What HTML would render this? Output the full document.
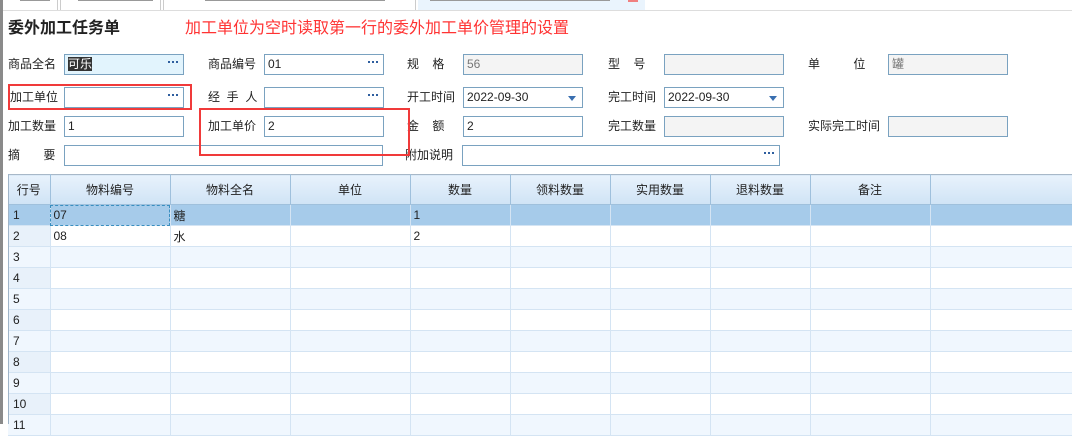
<!DOCTYPE html>
<html><head><meta charset="utf-8"><style>
*{margin:0;padding:0;box-sizing:border-box}
body{width:1072px;height:424px;background:#fff;position:relative;overflow:hidden;font-family:"Liberation Sans","Noto Sans CJK SC",sans-serif;font-size:12px;color:#222}
.a{position:absolute}
.lb{position:absolute;font-size:12px;line-height:20px;white-space:nowrap}
.in{position:absolute;height:21px;border:1px solid #7aa2c0;background:#fff;font-size:12px;line-height:19px;padding-left:3px;font-family:"Liberation Sans","Noto Sans CJK SC",sans-serif}
.g{background:#f4f4f4;color:#777}
.dots{position:absolute;right:4px;top:4px;width:11px;height:6px}
.dots i{position:absolute;top:2px;width:2px;height:2px;background:#2f5f9f}
.tri{position:absolute;right:6px;top:8px;width:0;height:0;border-left:4px solid transparent;border-right:4px solid transparent;border-top:5px solid #3a6fb0}
.red{position:absolute;border:2px solid #f03a3a}
table{position:absolute;left:8px;top:174px;border-collapse:collapse;table-layout:fixed;width:1072px}
td,th{height:21px;border-right:1px solid #d4e4f3;border-bottom:1px solid #d4e4f3;font-weight:normal;font-size:12px;padding-left:3px;text-align:left;white-space:nowrap;overflow:hidden}
th{height:30px;background:linear-gradient(#e8f2fc,#cfe3f5);border-right:1px solid #9fc0dc;border-bottom:1px solid #9fc0dc;border-top:1px solid #a8b8c8;text-align:center;padding:0}
tr.s td{background:#a6cbea}
tr.o td{background:#f0f7fe}
td.n{background:#e8f1fa;padding-left:5px}
tr.s td.n{background:#a6cbea}
</style></head><body>
<div class="a" style="left:0;top:0;width:3px;height:424px;background:#8a8a8a"></div>
<div class="a" style="left:3px;top:10px;width:1069px;height:1px;background:#ddd"></div>
<div class="a" style="left:57px;top:0;width:1px;height:10px;background:#ccc"></div>
<div class="a" style="left:60px;top:0;width:1px;height:10px;background:#ccc"></div>
<div class="a" style="left:160px;top:0;width:1px;height:10px;background:#ccc"></div>
<div class="a" style="left:163px;top:0;width:1px;height:10px;background:#ccc"></div>
<div class="a" style="left:415px;top:0;width:1px;height:10px;background:#ccc"></div>
<div class="a" style="left:418px;top:0;width:227px;height:10px;background:#eaf4fd"></div>
<div class="a" style="left:20px;top:0;width:30px;height:1px;background:#999"></div>
<div class="a" style="left:78px;top:0;width:75px;height:1px;background:#999"></div>
<div class="a" style="left:205px;top:0;width:180px;height:1px;background:#999"></div>
<div class="a" style="left:430px;top:0;width:180px;height:1px;background:#999"></div>
<div class="a" style="left:628px;top:0;width:10px;height:2px;background:#f08080"></div>

<div class="lb" style="left:8px;top:18px;font-size:16px;font-weight:bold;line-height:22px">委外加工任务单</div>
<div class="lb" style="left:185px;top:18px;font-size:16px;color:#f33;line-height:22px">加工单位为空时读取第一行的委外加工单价管理的设置</div>

<div class="lb" style="left:8px;top:54px">商品全名</div>
<div class="in" style="left:64px;top:54px;width:120px;background:#e2f4fd"><span style="background:#333;color:#fff">可乐</span><span class="dots"><i style="left:0"></i><i style="left:4px"></i><i style="left:8px"></i></span></div>
<div class="lb" style="left:208px;top:54px">商品编号</div>
<div class="in" style="left:264px;top:54px;width:120px">01<span class="dots"><i style="left:0"></i><i style="left:4px"></i><i style="left:8px"></i></span></div>
<div class="lb" style="left:407px;top:54px">规&nbsp;&nbsp;&nbsp;&nbsp;格</div>
<div class="in g" style="left:463px;top:54px;width:120px">56</div>
<div class="lb" style="left:608px;top:54px">型&nbsp;&nbsp;&nbsp;&nbsp;号</div>
<div class="in g" style="left:664px;top:54px;width:120px"></div>
<div class="lb" style="left:808px;top:54px">单&nbsp;&nbsp;&nbsp;&nbsp;&nbsp;&nbsp;&nbsp;&nbsp;&nbsp;&nbsp;位</div>
<div class="in g" style="left:888px;top:54px;width:120px">罐</div>

<div class="lb" style="left:10px;top:87px">加工单位</div>
<div class="in" style="left:64px;top:87px;width:120px"><span class="dots"><i style="left:0"></i><i style="left:4px"></i><i style="left:8px"></i></span></div>
<div class="lb" style="left:208px;top:87px">经&nbsp;&nbsp;手&nbsp;&nbsp;人</div>
<div class="in" style="left:264px;top:87px;width:120px"><span class="dots"><i style="left:0"></i><i style="left:4px"></i><i style="left:8px"></i></span></div>
<div class="lb" style="left:407px;top:87px">开工时间</div>
<div class="in" style="left:463px;top:87px;width:120px">2022-09-30<span class="tri"></span></div>
<div class="lb" style="left:608px;top:87px">完工时间</div>
<div class="in" style="left:664px;top:87px;width:120px">2022-09-30<span class="tri"></span></div>

<div class="lb" style="left:8px;top:116px">加工数量</div>
<div class="in" style="left:64px;top:116px;width:120px">1</div>
<div class="lb" style="left:208px;top:116px">加工单价</div>
<div class="in" style="left:264px;top:116px;width:120px">2</div>
<div class="lb" style="left:407px;top:116px">金&nbsp;&nbsp;&nbsp;&nbsp;额</div>
<div class="in" style="left:463px;top:116px;width:120px">2</div>
<div class="lb" style="left:608px;top:116px">完工数量</div>
<div class="in g" style="left:664px;top:116px;width:120px"></div>
<div class="lb" style="left:808px;top:116px">实际完工时间</div>
<div class="in g" style="left:888px;top:116px;width:120px"></div>

<div class="lb" style="left:8px;top:145px">摘&nbsp;&nbsp;&nbsp;&nbsp;&nbsp;&nbsp;&nbsp;要</div>
<div class="in" style="left:64px;top:145px;width:319px"></div>
<div class="lb" style="left:405px;top:145px">附加说明</div>
<div class="in" style="left:462px;top:145px;width:318px"><span class="dots"><i style="left:0"></i><i style="left:4px"></i><i style="left:8px"></i></span></div>

<div class="red" style="left:8px;top:84px;width:184px;height:26px"></div>
<div class="red" style="left:199px;top:108px;width:211px;height:48px"></div>

<table>
<colgroup><col style="width:42px"><col style="width:120px"><col style="width:120px"><col style="width:120px"><col style="width:100px"><col style="width:100px"><col style="width:100px"><col style="width:100px"><col style="width:120px"><col style="width:150px"></colgroup>
<tr><th>行号</th><th>物料编号</th><th>物料全名</th><th>单位</th><th>数量</th><th>领料数量</th><th>实用数量</th><th>退料数量</th><th>备注</th><th></th></tr>
<tr class="s"><td class="n">1</td><td style="outline:1px dashed #3a8fc0;outline-offset:-1px">07</td><td>糖</td><td></td><td>1</td><td></td><td></td><td></td><td></td><td></td></tr>
<tr><td class="n">2</td><td>08</td><td>水</td><td></td><td>2</td><td></td><td></td><td></td><td></td><td></td></tr>
<tr class="o"><td class="n">3</td><td></td><td></td><td></td><td></td><td></td><td></td><td></td><td></td><td></td></tr>
<tr><td class="n">4</td><td></td><td></td><td></td><td></td><td></td><td></td><td></td><td></td><td></td></tr>
<tr class="o"><td class="n">5</td><td></td><td></td><td></td><td></td><td></td><td></td><td></td><td></td><td></td></tr>
<tr><td class="n">6</td><td></td><td></td><td></td><td></td><td></td><td></td><td></td><td></td><td></td></tr>
<tr class="o"><td class="n">7</td><td></td><td></td><td></td><td></td><td></td><td></td><td></td><td></td><td></td></tr>
<tr><td class="n">8</td><td></td><td></td><td></td><td></td><td></td><td></td><td></td><td></td><td></td></tr>
<tr class="o"><td class="n">9</td><td></td><td></td><td></td><td></td><td></td><td></td><td></td><td></td><td></td></tr>
<tr><td class="n">10</td><td></td><td></td><td></td><td></td><td></td><td></td><td></td><td></td><td></td></tr>
<tr class="o"><td class="n">11</td><td></td><td></td><td></td><td></td><td></td><td></td><td></td><td></td><td></td></tr>
</table>
<div class="a" style="left:8px;top:174px;width:1px;height:250px;background:#9fb4c8"></div>
</body></html>
